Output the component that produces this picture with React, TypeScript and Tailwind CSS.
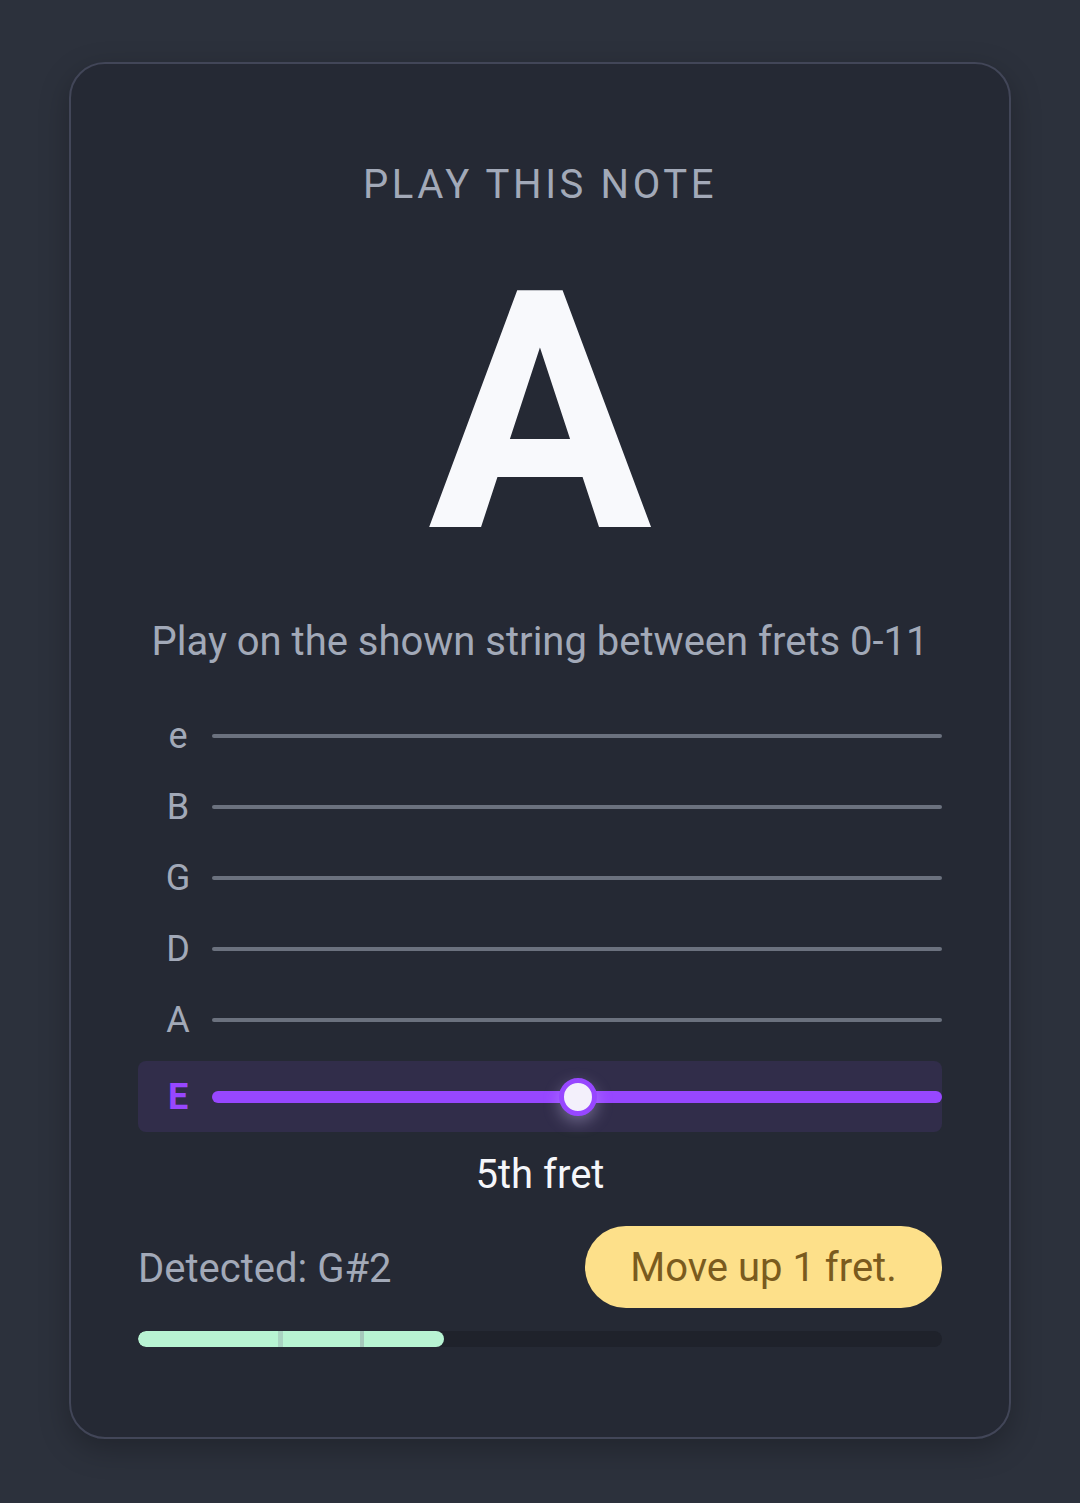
const strings = ["e", "B", "G", "D", "A"];

const App = () => {
  return (
    <div
      className="min-h-[1503px] w-full bg-[#2c313c] pt-[62px]"
      style={{ fontFamily: "Roboto, 'Liberation Sans', sans-serif" }}
    >
      <div className="mx-auto flex w-[942px] flex-col rounded-[36px] border-2 border-[#424658] bg-[#252934] px-[67px] pt-[91px] pb-[90px] shadow-[0_10px_30px_rgba(0,0,0,0.25)]">
        <div className="text-center text-[40px] leading-[60px] tracking-[0.09em] text-[#a2a9b8]">
          PLAY THIS NOTE
        </div>
        <div className="mt-[32px] text-center text-[333px] font-bold leading-[333px] text-[#f8f9fc]">
          A
        </div>
        <div className="mt-[32px] text-center text-[40px] leading-[60px] text-[#a2a9b8]">
          Play on the shown string between frets 0-11
        </div>

        {/* strings */}
        <div className="mt-[28px] flex flex-col">
          {strings.map((s) => (
            <div key={s} className="flex h-[71px] items-center pl-4">
              <div className="w-12 text-center text-[36px] leading-none text-[#a2a9b8]">
                {s}
              </div>
              <div className="ml-2.5 h-[4px] flex-1 rounded-full bg-[#6b717e]" />
            </div>
          ))}
          <div className="mt-[6px] flex h-[71px] items-center rounded-lg bg-[#312d4a] pl-4">
            <div className="w-12 text-center text-[36px] font-bold leading-none text-[#9747ff]">
              E
            </div>
            <div className="relative ml-2.5 flex h-[12px] flex-1 items-center rounded-full bg-[#9747ff]">
              <div className="absolute left-[347px] top-1/2 h-[38px] w-[38px] -translate-y-1/2 rounded-full border-[5px] border-[#9747ff] bg-[#f3f0fb] shadow-[0_6px_16px_rgba(220,210,255,0.35)]" />
            </div>
          </div>
        </div>

        <div className="mt-3 pt-[1px] text-center text-[40px] leading-[60px] text-[#f5f6fa]">
          5th fret
        </div>

        <div className="mt-[21px] flex items-center justify-between">
          <div className="pt-[3px] text-[40px] leading-none text-[#a2a9b8]">Detected: G#2</div>
          <div className="flex h-[82px] w-[357px] items-center justify-center rounded-full bg-[#fde08a] pt-[2px] text-[40px] text-[#7a5b1e]">
            Move up 1 fret.
          </div>
        </div>

        <div className="mt-[23px] flex h-4 w-full overflow-hidden rounded-full bg-[#1f222b]">
          <div className="flex h-full w-[306px] rounded-full bg-[#b8f4d3]">
            <div className="w-[140px]" />
            <div className="w-[5px] bg-[#a9d4c2]" />
            <div className="w-[77px]" />
            <div className="w-[4px] bg-[#a6c9bc]" />
          </div>
        </div>
      </div>
    </div>
  );
};

export default App;
